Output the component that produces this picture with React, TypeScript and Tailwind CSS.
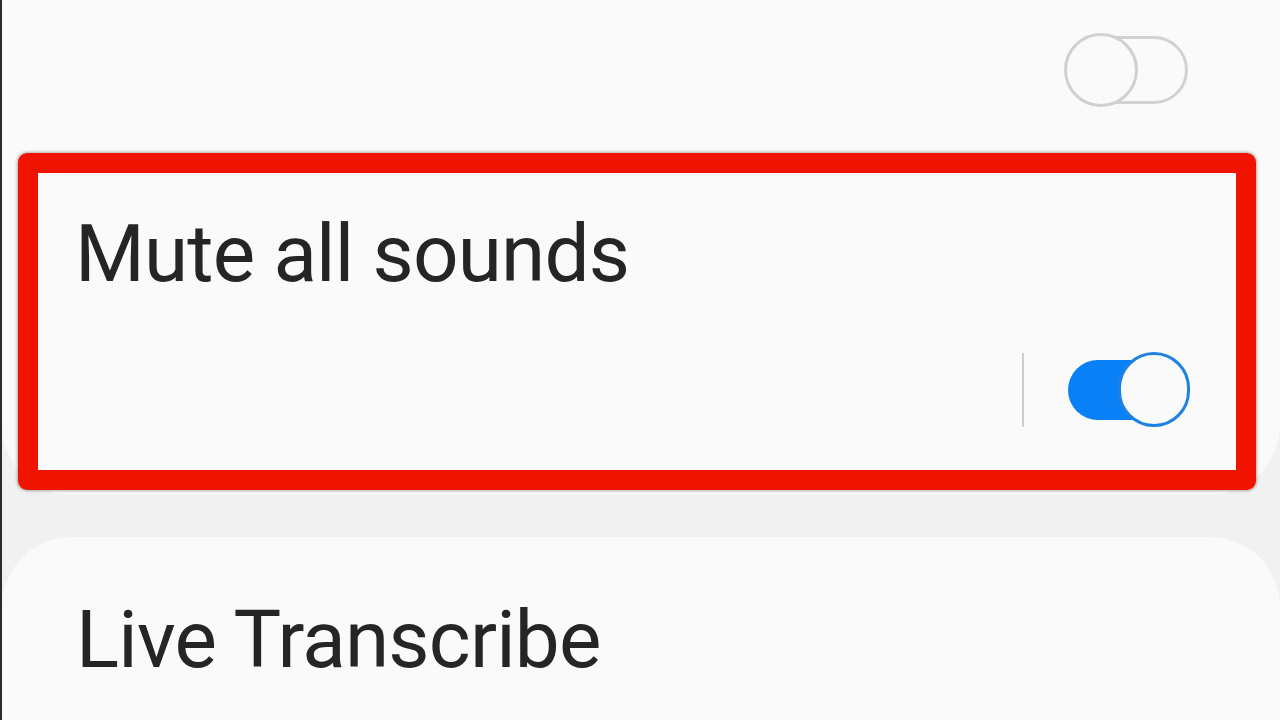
import React from "react";

function OffToggle() {
  return (
    <div className="relative w-[124px] h-[74px]">
      <div className="absolute left-[3px] top-[3px] w-[121px] h-[68px] rounded-full border-[3px] border-[#d2d2d2]" />
      <div className="absolute left-0 top-0 w-[74px] h-[74px] rounded-full border-[3px] border-[#d0d0d0] bg-[#fafafa]" />
    </div>
  );
}

function OnToggle() {
  return (
    <div className="relative w-[122px] h-[75px]">
      <div className="absolute left-0 top-[8px] w-[100px] h-[60px] rounded-full bg-[#0a80f6]" />
      <div className="absolute left-[50px] top-0 w-[72px] h-[75px] rounded-full border-[3px] border-[#1f82e2] bg-[#fafafa]" />
    </div>
  );
}

export default function App() {
  return (
    <div
      className="h-[720px] w-[1280px] overflow-hidden bg-[#f1f1f1] border-l-2 border-[#2c2c2c] flex flex-col"
      style={{ fontFamily: "Roboto, 'Noto Sans', sans-serif" }}
    >
      <div className="bg-[#fafafa] rounded-b-[70px] h-[495px] flex flex-col shrink-0">
        <div className="h-[153px] flex items-start justify-end pr-[92px] pt-[33px]">
          <OffToggle />
        </div>
        <div className="ml-[16px] mr-[24px] h-[337px] border-[20px] border-[#f01300] rounded-[9px] shadow-[0_0_3px_1px_rgba(0,0,0,0.3)] flex flex-col">
          <div className="pl-[37px] pt-[34px] text-[80px] leading-[94px] text-[#252525] tracking-[-0.8px]">
            Mute all sounds
          </div>
          <div className="flex items-center justify-end pr-[46px] mt-[51px]">
            <div className="w-[2px] h-[74px] bg-[#cdcdcd] mr-[44px]" />
            <OnToggle />
          </div>
        </div>
      </div>
      <div className="h-[42px] shrink-0" />
      <div className="flex-1 bg-[#fafafa] rounded-t-[70px] pl-[74px] pt-[56px]">
        <div className="text-[80px] leading-[94px] text-[#252525] tracking-[-0.8px]">Live Transcribe</div>
      </div>
    </div>
  );
}
